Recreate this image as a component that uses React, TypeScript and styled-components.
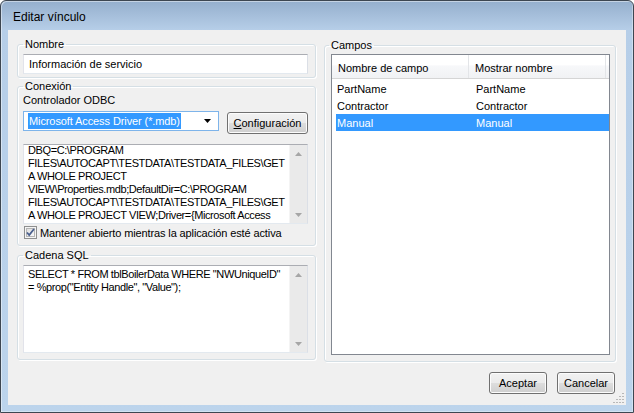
import * as React from "react"
import styled, { createGlobalStyle } from "styled-components"

const GlobalStyle = createGlobalStyle`
  html, body {
    margin: 0;
    padding: 0;
    background: #ffffff;
  }
  body {
    font-family: "Liberation Sans", Arial, sans-serif;
    font-size: 11px;
    color: #000;
  }
`

const Window = styled.div`
  width: 634px;
  height: 413px;
  box-sizing: border-box;
  border: 1px solid #3d4651;
  border-radius: 6px 6px 0 0;
  background: linear-gradient(to bottom, #95afcd 0px, #b6cee8 29px, #bcd4ec 100%);
  box-shadow: inset 1px 1px 0 rgba(255, 255, 255, 0.45), inset -1px -1px 0 rgba(255, 255, 255, 0.35);
  padding: 0 7px 7px 7px;
  display: flex;
  flex-direction: column;
`

const TitleBar = styled.div`
  height: 29px;
  box-sizing: border-box;
  padding: 3px 0 0 5px;
  display: flex;
  align-items: center;
  font-size: 12px;
  color: #000;
`

const Client = styled.div`
  position: relative;
  flex: 1;
  background: #f0f0f0;
  padding: 8px 10px 10px 9px;
  display: flex;
  flex-direction: column;
`

const Main = styled.div`
  display: flex;
  gap: 8px;
  height: 324px;
`

const Column = styled.div<{ $w: number }>`
  width: ${p => p.$w}px;
  display: flex;
  flex-direction: column;
`

const Group = styled.fieldset<{ $top?: number; $pad?: string; $grow?: boolean }>`
  margin: ${p => p.$top ?? 0}px 0 0 0;
  padding: ${p => p.$pad ?? "3px 7px 3px 5px"};
  border: 1px solid #d5dfe5;
  border-radius: 3px;
  box-shadow: inset 1px 1px 0 #fff, 1px 1px 0 #fff;
  min-width: 0;
  display: flex;
  flex-direction: column;
  ${p => (p.$grow ? "flex: 1;" : "")}
`

const Legend = styled.legend<{ $shift?: number }>`
  padding: 0 2px;
  margin-left: ${p => p.$shift ?? 0}px;
  line-height: 13px;
  font-size: 11px;
`

const TextBox = styled.div`
  height: 20px;
  box-sizing: border-box;
  border: 1px solid;
  border-color: #abadb3 #dbdfe6 #e3e9ef #e2e3ea;
  background: #fff;
  padding: 0 5px;
  display: flex;
  align-items: center;
`

const FieldLabel = styled.div`
  line-height: 13px;
  margin-bottom: 4px;
`

const ComboRow = styled.div`
  display: flex;
  height: 23px;
  gap: 8px;
  align-items: flex-start;
`

const Combo = styled.div`
  width: 196px;
  height: 20px;
  box-sizing: border-box;
  border: 1px solid #7eb4ea;
  background: #fff;
  display: flex;
  align-items: center;
  padding-left: 4px;
`

const Selected = styled.span`
  background: #3399ff;
  color: #fff;
  line-height: 16px;
  padding: 0 1px;
  letter-spacing: -0.1px;
`

const ComboArrow = styled.div`
  margin-left: auto;
  width: 17px;
  height: 100%;
  display: flex;
  align-items: center;
  justify-content: center;
  padding-right: 2px;
`

const Button = styled.button<{ $w: number; $h?: number; $top?: number }>`
  width: ${p => p.$w}px;
  height: ${p => p.$h ?? 22}px;
  margin: ${p => p.$top ?? 0}px 0 0 0;
  padding: 0;
  font-family: "Liberation Sans", Arial, sans-serif;
  font-size: 11px;
  color: #000;
  border: 1px solid #707070;
  border-radius: 3px;
  background: linear-gradient(to bottom, #f2f2f2 0%, #ebebeb 50%, #dddddd 51%, #cfcfcf 100%);
  box-shadow: inset 0 0 0 1px #fcfcfc;
  u {
    text-decoration: underline;
  }
`

const Memo = styled.div<{ $h: number; $top?: number }>`
  height: ${p => p.$h}px;
  margin-top: ${p => p.$top ?? 0}px;
  box-sizing: border-box;
  border: 1px solid;
  border-color: #abadb3 #dbdfe6 #e3e9ef #e2e3ea;
  background: #fff;
  display: flex;
`

const MemoText = styled.div<{ $shift?: number; $pad?: number }>`
  flex: 1;
  overflow: hidden;
  white-space: pre;
  line-height: 13px;
  letter-spacing: -0.4px;
  padding: ${p => p.$pad ?? 0}px 2px 0 4px;
  > div:first-child {
    margin-top: ${p => p.$shift ?? 0}px;
  }
`

const ScrollBar = styled.div`
  width: 17px;
  background: #eaeaea;
  border-left: 1px solid #f4f4f4;
  display: flex;
  flex-direction: column;
  justify-content: space-between;
`

const ScrollButton = styled.div`
  height: 17px;
  display: flex;
  align-items: center;
  justify-content: center;
`

const CheckRow = styled.label`
  display: flex;
  align-items: center;
  gap: 3px;
  margin-top: 2px;
  height: 13px;
  padding-left: 1px;
  letter-spacing: -0.12px;
`

const ListView = styled.div`
  flex: 1;
  border: 1px solid #828790;
  background: #fff;
  display: flex;
  flex-direction: column;
`

const Header = styled.div`
  height: 24px;
  box-sizing: border-box;
  display: flex;
  border-bottom: 1px solid #d5d5d5;
  background: linear-gradient(to bottom, #ffffff 0%, #ffffff 45%, #f7f8fa 46%, #f1f2f4 100%);
`

const HeaderCell = styled.div`
  width: 137px;
  box-sizing: border-box;
  border-right: 1px solid #e3e5e8;
  padding: 2px 0 0 6px;
  display: flex;
  align-items: center;
`

const Rows = styled.div`
  padding-top: 1px;
`

const Row = styled.div<{ $selected?: boolean }>`
  height: 17px;
  margin-left: 4px;
  display: flex;
  align-items: center;
  background: ${p => (p.$selected ? "#3399ff" : "transparent")};
  color: ${p => (p.$selected ? "#fff" : "#000")};
`

const Cell = styled.div<{ $w?: number; $pad: number }>`
  ${p => (p.$w ? `width: ${p.$w}px;` : "flex: 1;")}
  padding-left: ${p => p.$pad}px;
  box-sizing: border-box;
`

const Footer = styled.div`
  display: flex;
  justify-content: flex-end;
  gap: 10px;
  margin-top: 10px;
  padding-right: 1px;
`

const Grip = styled.svg`
  position: absolute;
  right: 1px;
  bottom: 1px;
`

const Arrow = ({ up, color }: { up?: boolean; color: string }) => (
  <svg width="7" height="4" viewBox="0 0 7 4">
    <path d={up ? "M0 4 L3.5 0 L7 4 Z" : "M0 0 L7 0 L3.5 4 Z"} fill={color} />
  </svg>
)

const Scroll = () => (
  <ScrollBar>
    <ScrollButton>
      <Arrow up color="#a6a6a6" />
    </ScrollButton>
    <ScrollButton>
      <Arrow color="#a6a6a6" />
    </ScrollButton>
  </ScrollBar>
)

const CheckBox = () => (
  <svg width="13" height="13" viewBox="0 0 13 13">
    <defs>
      <linearGradient id="cbg" x1="0" y1="0" x2="1" y2="1">
        <stop offset="0" stopColor="#dcdcdc" />
        <stop offset="1" stopColor="#fbfbfb" />
      </linearGradient>
    </defs>
    <rect x="0.5" y="0.5" width="12" height="12" fill="#f4f4f4" stroke="#8e8f8f" />
    <rect x="2.5" y="2.5" width="8" height="8" fill="url(#cbg)" stroke="#b5b5b5" />
    <path d="M3 6.5 L5.2 9 L10 3" fill="none" stroke="#4a5f8d" strokeWidth="1.8" />
  </svg>
)

const connLines = [
  "DBQ=C:\\PROGRAM",
  "FILES\\AUTOCAPT\\TESTDATA\\TESTDATA_FILES\\GET",
  "A WHOLE PROJECT",
  "VIEW\\Properties.mdb;DefaultDir=C:\\PROGRAM",
  "FILES\\AUTOCAPT\\TESTDATA\\TESTDATA_FILES\\GET",
  "A WHOLE PROJECT VIEW;Driver={Microsoft Access",
]

const sqlLines = [
  'SELECT * FROM tblBoilerData WHERE "NWUniqueID"',
  '= %prop("Entity Handle", "Value");',
]

const fields = [
  { name: "PartName", display: "PartName" },
  { name: "Contractor", display: "Contractor" },
  { name: "Manual", display: "Manual", selected: true },
]

export default function App() {
  return (
    <>
      <GlobalStyle />
      <Window>
        <TitleBar>Editar vínculo</TitleBar>
        <Client>
          <Main>
            <Column $w={299}>
              <Group>
                <Legend>Nombre</Legend>
                <TextBox>Información de servicio</TextBox>
              </Group>

              <Group $top={2} $pad="1px 7px 6px 5px">
                <Legend>Conexión</Legend>
                <FieldLabel>Controlador ODBC</FieldLabel>
                <ComboRow>
                  <Combo>
                    <Selected>Microsoft Access Driver (*.mdb)</Selected>
                    <ComboArrow>
                      <Arrow color="#000" />
                    </ComboArrow>
                  </Combo>
                  <Button $w={81} $top={1}>
                    <u>C</u>onfiguración
                  </Button>
                </ComboRow>
                <Memo $h={80} $top={10}>
                  <MemoText $shift={-1} $pad={0}>
                    {connLines.map((l, i) => (
                      <div key={i}>{l}</div>
                    ))}
                  </MemoText>
                  <Scroll />
                </Memo>
                <CheckRow>
                  <CheckBox />
                  Mantener abierto mientras la aplicación esté activa
                </CheckRow>
              </Group>

              <Group $top={3} $pad="3px 7px 6px 5px">
                <Legend>Cadena SQL</Legend>
                <Memo $h={88}>
                  <MemoText $pad={2}>
                    {sqlLines.map((l, i) => (
                      <div key={i}>{l}</div>
                    ))}
                  </MemoText>
                  <Scroll />
                </Memo>
              </Group>
            </Column>

            <Column $w={292}>
              <Group $top={1} $pad="2px 5px 6px 6px" $grow>
                <Legend $shift={-2}>Campos</Legend>
                <ListView>
                  <Header>
                    <HeaderCell>Nombre de campo</HeaderCell>
                    <HeaderCell>Mostrar nombre</HeaderCell>
                  </Header>
                  <Rows>
                    {fields.map(f => (
                      <Row key={f.name} $selected={f.selected}>
                        <Cell $w={134} $pad={1}>{f.name}</Cell>
                        <Cell $pad={6}>{f.display}</Cell>
                      </Row>
                    ))}
                  </Rows>
                </ListView>
              </Group>
            </Column>
          </Main>

          <Footer>
            <Button $w={58}>Aceptar</Button>
            <Button $w={58}>Cancelar</Button>
          </Footer>

          <Grip width="12" height="12" viewBox="0 0 12 12">
            {[
              [10, 2], [10, 5], [7, 5], [10, 8], [7, 8], [4, 8], [10, 11], [7, 11], [4, 11], [1, 11],
            ].map(([x, y]) => (
              <rect key={`${x}-${y}`} x={x - 1} y={y - 1} width="2" height="1" fill="#b8b8b8" />
            ))}
          </Grip>
        </Client>
      </Window>
    </>
  )
}
